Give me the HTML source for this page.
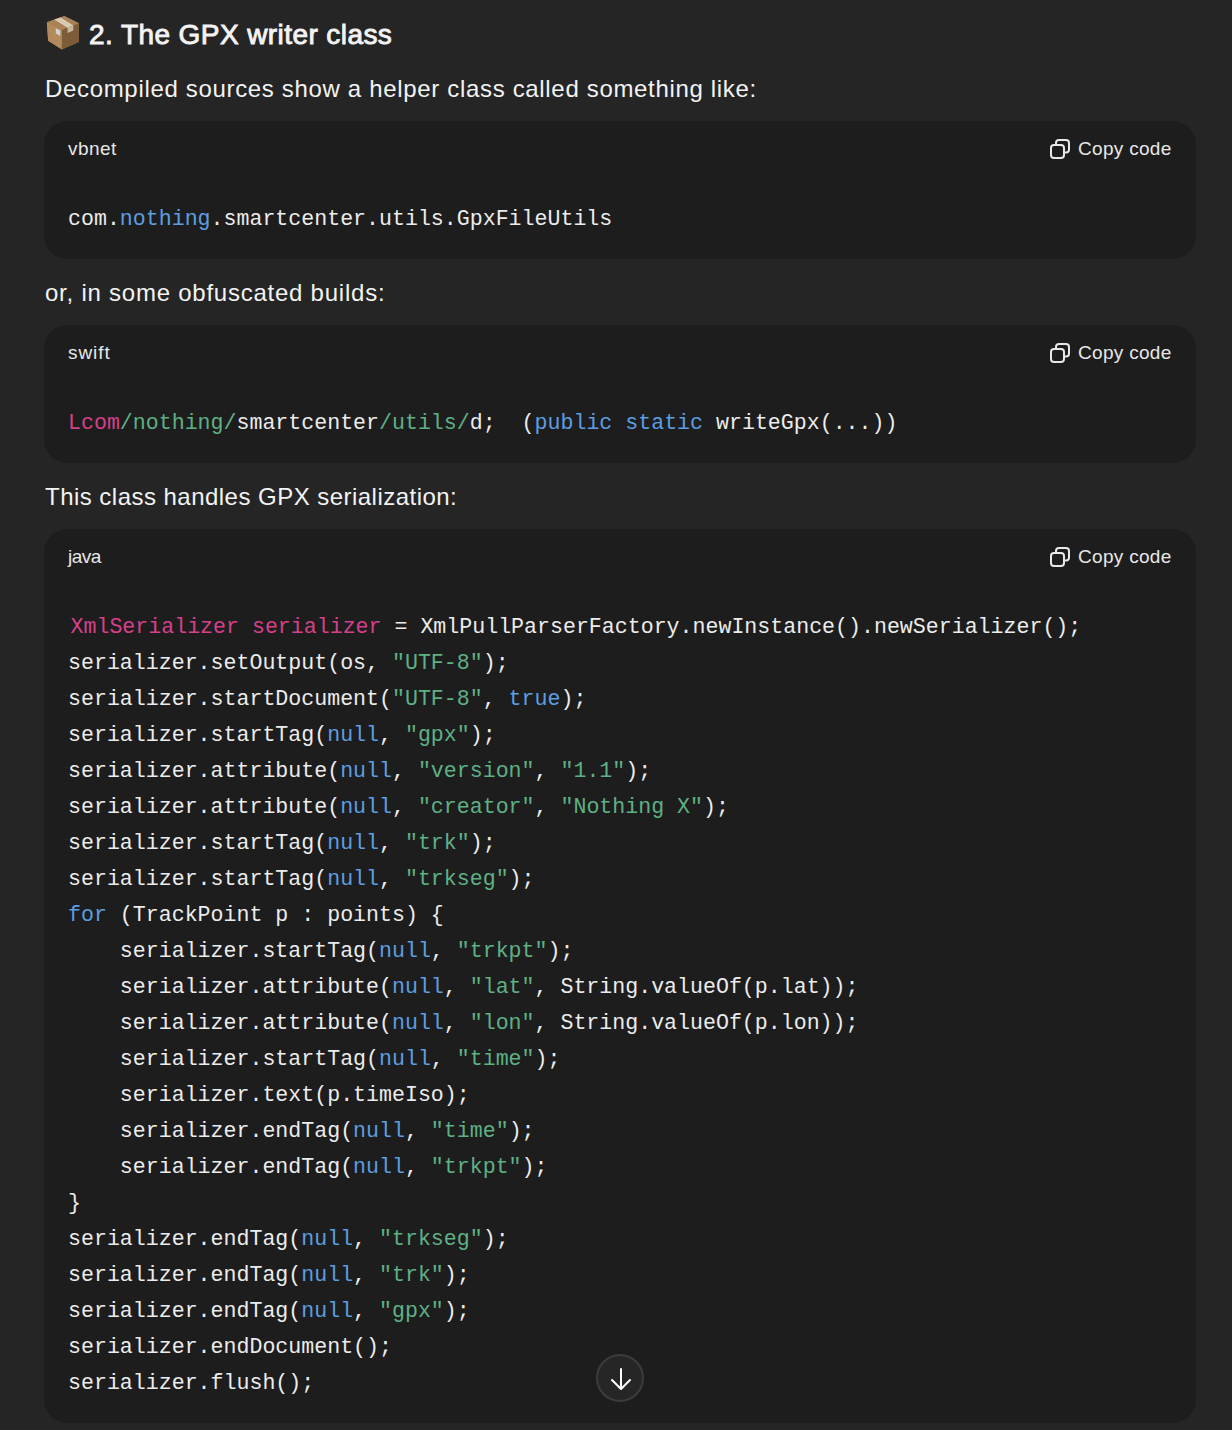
<!DOCTYPE html>
<html><head><meta charset="utf-8">
<style>
html,body{margin:0;padding:0;}
body{width:1232px;height:1430px;background:#252525;position:relative;overflow:hidden;font-family:"Liberation Sans",sans-serif;color:#f3f3f3;}
.t{position:absolute;white-space:pre;}
.h{font-weight:normal;font-size:28px;line-height:36px;letter-spacing:0.42px;-webkit-text-stroke:0.9px #f3f3f3;}
.p{font-size:24px;line-height:36px;}
.blk{position:absolute;left:44px;width:1152px;background:#1d1d1d;border-radius:24px;}
.lab{position:absolute;left:24px;top:1px;height:54px;line-height:54px;font-size:19px;letter-spacing:0.45px;color:#e8e8e8;}
.cpi{position:absolute;left:1006px;top:17px;}
.cpt{position:absolute;left:1034px;top:1px;line-height:54px;font-size:19px;letter-spacing:0.3px;color:#e8e8e8;}
.code{position:absolute;left:24px;top:80px;font-family:"Liberation Mono",monospace;font-size:21.6px;line-height:36px;white-space:pre;color:#ececec;}
.b{color:#5c9ee0}.g{color:#5eb085}.k{color:#d6408a}
</style></head><body>
<svg style="position:absolute;left:46px;top:15px" width="34" height="36" viewBox="0 0 34 36">
  <path d="M0.9 7.2 L18.35 1.1 L33 8.2 L32.8 27.1 L15.9 34.6 L2.1 25.8 Z" fill="#9c764b"/>
  <path d="M0.9 7.2 L18.35 1.1 L33 8.2 L15.9 14.9 Z" fill="#a98156"/>
  <path d="M0.9 7.2 L15.9 14.9 L15.9 34.6 L2.1 25.8 Z" fill="#b38a5c"/>
  <path d="M15.9 14.9 L33 8.2 L32.8 27.1 L15.9 34.6 Z" fill="#7d5c38"/>
  <path d="M8.2 4.6 L14.7 2.4 L27.3 10.45 L21.6 12.7 Z" fill="#d9cbb1"/>
  <path d="M21.6 12.7 L27.3 10.45 L27.3 15.6 L21.6 17.9 Z" fill="#c9b99c"/>
  <path d="M9.8 13.2 L14.3 15.5 L14.3 20.9 L9.8 18.6 Z" fill="#d2d2d2"/>
</svg>
<div class="t h" style="left:89px;top:17px;">2. The GPX writer class</div>
<div class="t p" style="left:45px;top:71px;letter-spacing:0.67px;">Decompiled sources show a helper class called something like:</div>
<div class="blk" style="top:121px;height:137.5px;">
  <div class="lab">vbnet</div>
  <svg class="cpi" width="21" height="22" viewBox="0 0 21 22"><rect x="1" y="7" width="13" height="13" rx="3" fill="none" stroke="#e8e8e8" stroke-width="2"/><path d="M6 7V5a3 3 0 0 1 3-3h7a3 3 0 0 1 3 3v6.5a3 3 0 0 1-3 3h-2" fill="none" stroke="#e8e8e8" stroke-width="2"/></svg><div class="cpt">Copy code</div>
  <div class="code">com.<span class="b">nothing</span>.smartcenter.utils.GpxFileUtils</div>
</div>
<div class="t p" style="left:45px;top:275px;letter-spacing:0.76px;">or, in some obfuscated builds:</div>
<div class="blk" style="top:325px;height:137.5px;">
  <div class="lab" style="letter-spacing:0.95px">swift</div>
  <svg class="cpi" width="21" height="22" viewBox="0 0 21 22"><rect x="1" y="7" width="13" height="13" rx="3" fill="none" stroke="#e8e8e8" stroke-width="2"/><path d="M6 7V5a3 3 0 0 1 3-3h7a3 3 0 0 1 3 3v6.5a3 3 0 0 1-3 3h-2" fill="none" stroke="#e8e8e8" stroke-width="2"/></svg><div class="cpt">Copy code</div>
  <div class="code"><span class="k">Lcom</span><span class="g">/nothing/</span>smartcenter<span class="g">/utils/</span>d;  (<span class="b">public</span> <span class="b">static</span> writeGpx(...))</div>
</div>
<div class="t p" style="left:45px;top:479px;letter-spacing:0.47px;">This class handles GPX serialization:</div>
<div class="blk" style="top:529px;height:894px;">
  <div class="lab" style="letter-spacing:-0.55px">java</div>
  <svg class="cpi" width="21" height="22" viewBox="0 0 21 22"><rect x="1" y="7" width="13" height="13" rx="3" fill="none" stroke="#e8e8e8" stroke-width="2"/><path d="M6 7V5a3 3 0 0 1 3-3h7a3 3 0 0 1 3 3v6.5a3 3 0 0 1-3 3h-2" fill="none" stroke="#e8e8e8" stroke-width="2"/></svg><div class="cpt">Copy code</div>
  <div class="code"><span style="position:relative;left:2.5px"><span class="k">XmlSerializer</span> <span class="k">serializer</span> = XmlPullParserFactory.newInstance().newSerializer();</span>
serializer.setOutput(os, <span class="g">"UTF-8"</span>);
serializer.startDocument(<span class="g">"UTF-8"</span>, <span class="b">true</span>);
serializer.startTag(<span class="b">null</span>, <span class="g">"gpx"</span>);
serializer.attribute(<span class="b">null</span>, <span class="g">"version"</span>, <span class="g">"1.1"</span>);
serializer.attribute(<span class="b">null</span>, <span class="g">"creator"</span>, <span class="g">"Nothing X"</span>);
serializer.startTag(<span class="b">null</span>, <span class="g">"trk"</span>);
serializer.startTag(<span class="b">null</span>, <span class="g">"trkseg"</span>);
<span class="b">for</span> (TrackPoint p : points) {
    serializer.startTag(<span class="b">null</span>, <span class="g">"trkpt"</span>);
    serializer.attribute(<span class="b">null</span>, <span class="g">"lat"</span>, String.valueOf(p.lat));
    serializer.attribute(<span class="b">null</span>, <span class="g">"lon"</span>, String.valueOf(p.lon));
    serializer.startTag(<span class="b">null</span>, <span class="g">"time"</span>);
    serializer.text(p.timeIso);
    serializer.endTag(<span class="b">null</span>, <span class="g">"time"</span>);
    serializer.endTag(<span class="b">null</span>, <span class="g">"trkpt"</span>);
}
serializer.endTag(<span class="b">null</span>, <span class="g">"trkseg"</span>);
serializer.endTag(<span class="b">null</span>, <span class="g">"trk"</span>);
serializer.endTag(<span class="b">null</span>, <span class="g">"gpx"</span>);
serializer.endDocument();
serializer.flush();</div>
</div>
<div style="position:absolute;left:596px;top:1354px;width:48px;height:48px;box-sizing:border-box;border-radius:50%;background:#262626;border:2px solid #3c3c3c;"></div>
<svg style="position:absolute;left:596px;top:1354px" width="48" height="48" viewBox="0 0 48 48"><path d="M25 15v20M16 26l9 9 9-9" fill="none" stroke="#fff" stroke-width="2" stroke-linecap="round" stroke-linejoin="round"/></svg>
</body></html>
